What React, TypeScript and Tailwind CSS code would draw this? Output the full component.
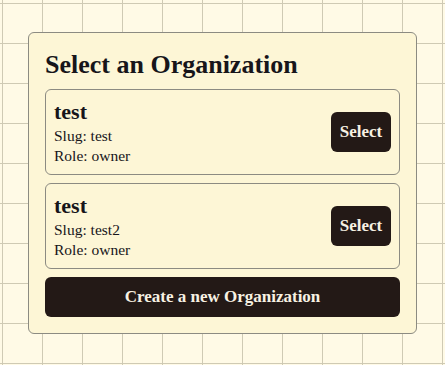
const orgs = [
  { name: "test", slug: "test", role: "owner" },
  { name: "test", slug: "test2", role: "owner" },
];

export default function App() {
  return (
    <div className="min-h-screen flex items-center justify-center bg-[#fffae6] bg-[linear-gradient(to_right,#cfcab4_1px,transparent_1px),linear-gradient(to_bottom,#cfcab4_1px,transparent_1px)] bg-[size:40px_40px] bg-[position:2px_3px] font-['Liberation_Serif',serif] text-[#17151a]">
      <div className="w-[389px] flex flex-col gap-2 p-4 bg-[#fdf6d6] border border-[#8c8b82] rounded-md">
        <h1 className="text-[26px] font-bold leading-8">Select an Organization</h1>
        {orgs.map((org, i) => (
          <div
            key={i}
            className="flex items-center justify-between p-2 border border-[#8c8b82] rounded-md"
          >
            <div className="flex flex-col">
              <span className="text-[22px] font-bold leading-7">{org.name}</span>
              <span className="text-[15.5px] leading-5">Slug: {org.slug}</span>
              <span className="text-[15.5px] leading-5">Role: {org.role}</span>
            </div>
            <button className="h-10 w-[60px] rounded-md bg-[#231916] text-[#f7f1e3] text-[17px] font-semibold">
              Select
            </button>
          </div>
        ))}
        <button className="h-10 w-full rounded-md bg-[#231916] text-[#f7f1e3] text-[17px] font-semibold">
          Create a new Organization
        </button>
      </div>
    </div>
  );
}
